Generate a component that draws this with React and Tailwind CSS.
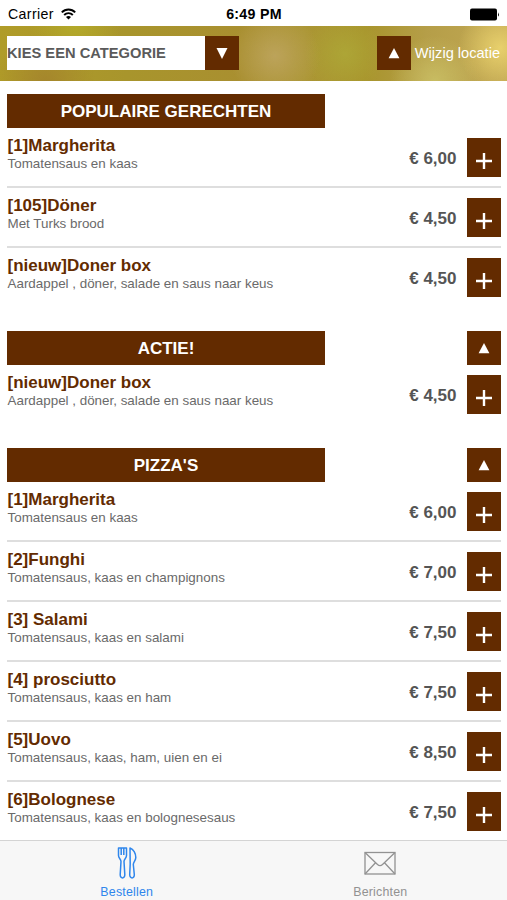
const SECTIONS = [
  {
    title: "POPULAIRE GERECHTEN",
    items: [
      { name: "[1]Margherita", detail: "Tomatensaus en kaas", price: "6,00" },
      { name: "[105]Döner", detail: "Met Turks brood", price: "4,50" },
      { name: "[nieuw]Doner box", detail: "Aardappel , döner, salade en saus naar keus", price: "4,50" },
    ],
  },
  {
    title: "ACTIE!",
    toTop: true,
    items: [
      { name: "[nieuw]Doner box", detail: "Aardappel , döner, salade en saus naar keus", price: "4,50" },
    ],
  },
  {
    title: "PIZZA'S",
    toTop: true,
    items: [
      { name: "[1]Margherita", detail: "Tomatensaus en kaas", price: "6,00" },
      { name: "[2]Funghi", detail: "Tomatensaus, kaas en champignons", price: "7,00" },
      { name: "[3] Salami", detail: "Tomatensaus, kaas en salami", price: "7,50" },
      { name: "[4] prosciutto", detail: "Tomatensaus, kaas en ham", price: "7,50" },
      { name: "[5]Uovo", detail: "Tomatensaus, kaas, ham, uien en ei", price: "8,50" },
      { name: "[6]Bolognese", detail: "Tomatensaus, kaas en bolognesesaus", price: "7,50" },
    ],
  },
]

function Triangle({ down }) {
  return (
    <svg width="12" height="11" viewBox="0 0 12 11" fill="white">
      {down ? <path d="M0.5 0H11.5L6 11Z" /> : <path d="M6 0L11.4 10.2H0.6Z" />}
    </svg>
  )
}

function StatusBar() {
  return (
    <div className="h-[25.5px] flex items-center justify-between pl-2 pr-[7px] pt-[3px] text-[14.2px] text-black">
      <div className="flex-1 flex items-center gap-[7px]">
        <span className="tracking-[0.35px]">Carrier</span>
        <svg width="15" height="12" viewBox="0 0 15 12" fill="none" stroke="black" strokeWidth="1.9">
          <path d="M0.8 4.4C4.5 0.6 10.5 0.6 14.2 4.4" />
          <path d="M3.2 7C5.6 4.5 9.4 4.5 11.8 7" />
          <path d="M7.5 11.6L5 9C6.4 7.6 8.6 7.6 10 9Z" fill="black" stroke="none" />
        </svg>
      </div>
      <span className="font-bold tracking-[0.3px]">6:49 PM</span>
      <div className="flex-1 flex justify-end">
        <svg width="31" height="13" viewBox="0 0 31 13">
          <rect x="1" y="0.5" width="27" height="12" rx="2" fill="black" />
          <path d="M29 4.2Q30.8 6.5 29 8.8Z" fill="black" />
        </svg>
      </div>
    </div>
  )
}

function Header() {
  return (
    <header className="h-[55.5px] px-[7px] flex items-center justify-between bg-[radial-gradient(circle_at_500px_22px,#e8d06c_0,#e8d06c00_42px),radial-gradient(circle_at_435px_55px,#c8bc62_0,#c8bc6200_45px),radial-gradient(circle_at_275px_30px,#bca35a_0,#bca35a00_45px),radial-gradient(circle_at_345px_28px,#ada536_0,#ada53600_40px),radial-gradient(circle_at_75px_0px,#b3a92a_0,#b3a92a00_45px),radial-gradient(circle_at_45px_55px,#a5862c_0,#a5862c00_50px),linear-gradient(90deg,#b09c28_0%,#a8952c_25%,#a98f30_48%,#ab9634_60%,#a8942c_72%,#b59e48_84%,#c2a854_100%)]">
      <div className="flex">
        <div className="w-[198px] h-[34px] bg-white flex items-center text-[14.7px] font-bold text-[#5a5a5a]">
          KIES EEN CATEGORIE
        </div>
        <div className="w-[34px] h-[34px] bg-[#632b00] flex items-center justify-center">
          <Triangle down />
        </div>
      </div>
      <div className="flex items-center gap-1 text-white text-[14.6px]">
        <div className="w-[34px] h-[34px] bg-[#632b00] flex items-center justify-center">
          <Triangle />
        </div>
        <span className="pt-0.5">Wijzig locatie</span>
      </div>
    </header>
  )
}

function MenuItem({ item, last }) {
  return (
    <div className={last ? "h-[59.85px] flex" : "h-[59.85px] flex border-b-2 border-[#dedede]"}>
      <div className="flex-1 pt-2 pl-[0.5px]">
        <h3 className="text-[17px] leading-5 font-bold text-[#632b00]">{item.name}</h3>
        <p className="text-[13.4px] leading-[15px] text-[#6a6a6a]">{item.detail}</p>
      </div>
      <span className="pt-[21px] mr-[10px] text-[17px] leading-5 font-bold text-[#555]">€ {item.price}</span>
      <button className="mt-[10px] w-[34px] h-[39px] bg-[#632b00] flex items-center justify-center pt-[7px]">
        <svg width="16" height="16" viewBox="0 0 16 16" stroke="white" strokeWidth="2.4">
          <path d="M8 0V16M0 8H16" />
        </svg>
      </button>
    </div>
  )
}

function Section({ section }) {
  return (
    <section className="mb-[23.2px]">
      <div className="flex justify-between h-[34.2px] text-white">
        <h2 className="w-[318px] bg-[#632b00] flex items-center justify-center pt-px text-[17px] font-bold">
          {section.title}
        </h2>
        {section.toTop && (
          <div className="w-[34px] bg-[#632b00] flex items-center justify-center">
            <Triangle />
          </div>
        )}
      </div>
      {section.items.map((item, i) => (
        <MenuItem key={item.name} item={item} last={i === section.items.length - 1} />
      ))}
    </section>
  )
}

function TabBar() {
  return (
    <nav className="h-[60px] shrink-0 flex bg-[#f7f7f7] border-t border-[#d4d4d4] text-[12.4px] leading-4 tracking-[0.2px]">
      <div className="flex-1 flex flex-col items-center pt-[6px] text-[#2f86ec]">
        <svg width="20" height="32" viewBox="0 0 20 32" fill="none" stroke="currentColor" strokeWidth="1.5" strokeLinejoin="round">
          <path d="M1.5 1H9.5V8.5C9.5 11.5 7 12 7 14.5L7.8 27.5C8 32 3 32 3.2 27.5L4 14.5C4 12 1.5 11.5 1.5 8.5Z" />
          <path d="M4.2 1V8M6.8 1V8" />
          <path d="M13 1C16.5 2 18.8 6.5 18.8 10.5C18.8 13.5 16.3 15 16.3 17.5L17.3 27.5C17.5 32 12.7 32 12.7 27.5L13.2 17Z" />
        </svg>
        <span className="mt-[5px]">Bestellen</span>
      </div>
      <div className="flex-1 flex flex-col items-center pt-[6px] text-[#929292]">
        <svg width="32" height="32" viewBox="0 0 32 32" fill="none" stroke="currentColor" strokeWidth="1.3">
          <rect x="1" y="5.5" width="30" height="21.5" />
          <path d="M1 5.5L13.5 17.5Q16 19.8 18.5 17.5L31 5.5M1 27L11.5 15.8M31 27L20.5 15.8" />
        </svg>
        <span className="mt-[5px]">Berichten</span>
      </div>
    </nav>
  )
}

export default function App() {
  return (
    <div className="w-full h-screen flex flex-col bg-white overflow-hidden font-['Liberation_Sans',Arial,sans-serif]">
      <StatusBar />
      <Header />
      <main className="flex-1 min-h-0 overflow-hidden pt-[13px] pl-[7px] pr-[6.5px]">
        {SECTIONS.map((section) => (
          <Section key={section.title} section={section} />
        ))}
      </main>
      <TabBar />
    </div>
  )
}
